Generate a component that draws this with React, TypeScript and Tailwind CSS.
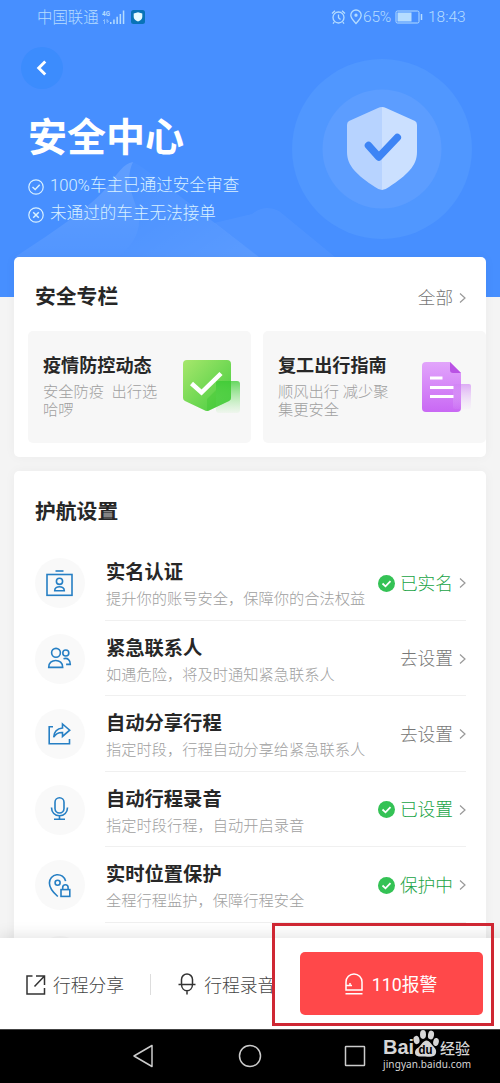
import type { ReactNode } from 'react';
import { ChevronLeft } from 'lucide-react';

type SettingItem = {
  title: string;
  description: string;
  status: string;
  done: boolean;
  icon: ReactNode;
};

const settings: SettingItem[] = [
  {
    title: '实名认证',
    description: '提升你的账号安全，保障你的合法权益',
    status: '已实名',
    done: true,
    icon: (
      <>
        <path d="M9.5 1h8" />
        <rect x="1" y="4.5" width="25" height="20.8" />
        <circle cx="13.5" cy="11.3" r="3.1" />
        <path d="M8.7 20.8c0-5.5 9.6-5.5 9.6 0z" />
      </>
    ),
  },
  {
    title: '紧急联系人',
    description: '如遇危险，将及时通知紧急联系人',
    status: '去设置',
    done: false,
    icon: (
      <>
        <circle cx="10" cy="7.8" r="4.4" />
        <path d="M2.7 22.4c-.4-9.2 14.4-9.2 14 0z" />
        <circle cx="19.8" cy="8" r="3" />
        <path d="M17.5 13.7c4.3-1.2 7 1.6 6.8 5.7h-4.2" />
      </>
    ),
  },
  {
    title: '自动分享行程',
    description: '指定时段，行程自动分享给紧急联系人',
    status: '去设置',
    done: false,
    icon: (
      <>
        <path d="M7 5.7H3.200v17h20.300v-4.800" />
        <path d="M16.500 3l7.200 6.200-7.200 6.200v-3.900c-4-.2-6.700 1.200-8.800 4.700.3-5.200 3.400-8.700 8.800-9.200z" />
      </>
    ),
  },
  {
    title: '自动行程录音',
    description: '指定时段行程，自动开启录音',
    status: '已设置',
    done: true,
    icon: (
      <>
        <rect x="9" y="1.7" width="9" height="15.300" rx="4.500" />
        <path d="M5.500 11.500c0 5 3.400 8.300 8 8.300s8-3.300 8-8.300M13.500 19.800v3.400M8 23.300h11" />
      </>
    ),
  },
  {
    title: '实时位置保护',
    description: '全程行程监护，保障行程安全',
    status: '保护中',
    done: true,
    icon: (
      <>
        <path d="M11.800 24.500C7.600 20.900 3.400 16.200 3.400 11a8.200 8.200 0 0 1 16.200-1.900" />
        <circle cx="11.600" cy="10.800" r="2.500" />
        <rect x="15" y="17.600" width="8.800" height="6.800" />
        <path d="M16.700 17.600v-2.200c0-3.600 5.400-3.600 5.400 0v2.200" />
      </>
    ),
  },
];

function Chevron() {
  return (
    <svg className="ml-[6px] h-[12px] w-[7px]" viewBox="0 0 7 12" fill="none" stroke="#999" strokeWidth="1.2">
      <path d="M1 1.5l5 4.5-5 4.5" />
    </svg>
  );
}

function StatusBar() {
  return (
    <div className="flex h-[34px] items-center pr-[33px] pl-[37px] text-[#b5dcff]">
      <span className="pt-[3px] text-[15.4px] leading-none font-light">中国联通</span>
      <svg className="ml-[3px] h-[16px] w-[25px]" viewBox="0 0 25 16" fill="currentColor">
        <text x="0" y="7" fontSize="8" fontWeight="700" textLength="8" lengthAdjust="spacingAndGlyphs">4G</text>
        <path d="M1 12l1.5-1.5V15M5 10.500v3l1.500-1z" stroke="currentColor" strokeWidth=".6" fill="none" />
        <path d="M8 13h1.500v2H8zM11.200 10.500h1.500V15h-1.500zM14.400 7.800h1.500V15h-1.500zM17.600 5h1.500v10h-1.500zM20.800 1.500h1.500V15h-1.500z" />
      </svg>
      <svg className="ml-[4px] h-[14px] w-[14px]" viewBox="0 0 14 14">
        <rect width="14" height="14" rx="2.5" fill="#0873b7" />
        <path d="M7 2.300l4.300 1.200V7c0 2.200-2 3.800-4.300 4.500C4.700 10.800 2.700 9.200 2.700 7V3.500z" fill="#e5faff" />
      </svg>
      <div className="ml-auto flex items-center">
        <svg className="h-[16px] w-[15px]" viewBox="0 0 15 16" fill="none" stroke="currentColor" strokeWidth="1.3">
          <circle cx="7.5" cy="8.5" r="5.5" />
          <path d="M7.500 5.500v3.300l2 1.700M1 4.500L4 1.700M14 4.500l-3-2.800M3.200 13.200l-1.200 1.500M11.800 13.200l1.200 1.500" />
        </svg>
        <svg className="ml-[4px] h-[16px] w-[12px]" viewBox="0 0 12 16" fill="none" stroke="currentColor" strokeWidth="1.3">
          <path d="M6 14.500C3.300 11.500.8 9 .8 6.200a5.200 5.200 0 0 1 10.400 0C11.200 9 8.700 11.500 6 14.500z" />
          <circle cx="6" cy="6.2" r="1" fill="currentColor" />
        </svg>
        <span className="ml-px w-[31px] pt-[2px] text-[15.5px] leading-none font-light tracking-[-0.2px] whitespace-nowrap">65%</span>
        <svg className="ml-px h-[14px] w-[28px]" viewBox="0 0 28 14" fill="none" stroke="currentColor">
          <rect x="1" y="1" width="23" height="12" rx="1.5" />
          <path d="M2.500 2.500h14v9h-14z" fill="currentColor" stroke="none" />
          <path d="M26.500 4v6" strokeWidth="1.5" />
        </svg>
        <span className="ml-[5px] w-[39px] pt-[2px] text-[15.5px] leading-none font-light whitespace-nowrap">18:43</span>
      </div>
    </div>
  );
}

function Hero() {
  return (
    <header className="relative h-[297px] shrink-0 bg-[#478fff] text-white">
      {/* 背景山形与盾牌 */}
      <svg className="absolute inset-0 h-[297px] w-[500px]" viewBox="0 0 500 297" fill="none">
        <defs>
          <linearGradient id="peak" x1="0" y1="0" x2="0" y2="1">
            <stop offset="0" stopColor="#fff" stopOpacity=".14" />
            <stop offset="1" stopColor="#fff" stopOpacity=".06" />
          </linearGradient>
          <linearGradient id="slope" x1="0" y1="0" x2="1" y2="1">
            <stop offset="0" stopColor="#fff" stopOpacity=".01" />
            <stop offset="1" stopColor="#fff" stopOpacity=".11" />
          </linearGradient>
        </defs>
        <path d="M15 257C55 231 91 207 108 186C118 173 123 164 133 162C126 177 130 190 137 209C143 227 136 242 119 257z" fill="url(#peak)" />
        <path d="M133 162C145 168 160 181 181 197L259 257H119C136 242 143 227 137 209C130 190 126 177 133 162z" fill="url(#slope)" />
        <path d="M214 223L252 214Q265 204 279 211L335 257H259z" fill="#fff" fillOpacity=".045" />
        <circle cx="382" cy="149" r="90" fill="#5097ff" />
        <circle cx="382" cy="149" r="59.5" fill="#5c9dff" />
        <path d="M382 107q-2 0-4 1l-29 13q-2 1-2 4v27c0 14 10 23 28 35q4 3 7 3z" fill="#b7d3ff" />
        <path d="M382 107q2 0 4 1l29 13q2 1 2 4v27c0 14-10 23-28 35q-4 3-7 3z" fill="#cbe0ff" />
        <path d="M368.500 145.500l10.300 11.500 18.500-19.500" stroke="#3d84f5" strokeWidth="7.5" strokeLinecap="round" strokeLinejoin="round" />
      </svg>
      <div className="relative">
        <StatusBar />
        <button className="mt-[13px] ml-[21px] flex h-[42px] w-[42px] items-center justify-center rounded-full bg-[#3c8cfd] pr-px">
          <ChevronLeft size={26} strokeWidth={2.7} strokeLinecap="butt" strokeLinejoin="miter" />
        </button>
        <h1 className="mt-[26px] ml-[28px] text-[39px] leading-[46px] font-bold">安全中心</h1>
        <div className="mt-[13px] ml-[28px] space-y-[4px] text-[16.6px] leading-[24px] font-light text-[#d8f0ff]">
          <div className="flex items-center">
            <svg className="mt-[2px] mr-[6px] h-[16px] w-[16px]" viewBox="0 0 16 16" fill="none" stroke="currentColor" strokeWidth="1.2">
              <circle cx="8" cy="8" r="7.2" />
              <path d="M4.500 8l2.700 2.500 4.500-4.700" strokeWidth="1.5" />
            </svg>
            <span>100%车主已通过安全审查</span>
          </div>
          <div className="flex items-center">
            <svg className="mt-[2px] mr-[6px] h-[16px] w-[16px]" viewBox="0 0 16 16" fill="none" stroke="currentColor" strokeWidth="1.2">
              <circle cx="8" cy="8" r="7.2" />
              <path d="M5.200 5.200l5.600 5.600M10.800 5.200l-5.600 5.600" strokeWidth="1.5" />
            </svg>
            <span>未通过的车主无法接单</span>
          </div>
        </div>
      </div>
    </header>
  );
}

function GreenShield() {
  return (
    <svg className="h-[54px] w-[58px]" viewBox="0 0 58 54" fill="none">
      <defs>
        <linearGradient id="green" x1="0" y1="0" x2="1" y2="1">
          <stop stopColor="#a7e76c" />
          <stop offset="1" stopColor="#42cb3e" />
        </linearGradient>
        <linearGradient id="greenTag" x1="0" y1="0" x2="0" y2="1">
          <stop stopColor="#42cf3b" stopOpacity=".8" />
          <stop offset="1" stopColor="#8de681" stopOpacity=".08" />
        </linearGradient>
      </defs>
      <path d="M4 1h40q4 0 4 4v34q0 2-2 3L27 51q-3 2-6 0L2 42q-2-1-2-3V5q0-4 4-4z" fill="url(#green)" />
      <rect x="33" y="22" width="24" height="32" rx="3" fill="url(#greenTag)" />
      <path d="M24 40L33 31V22h15v17q0 2-2 3L27 51q-1 1-3 1z" fill="#38c52e" fillOpacity=".35" />
      <path d="M8.500 24.500L18.500 33.500 38 14.500" stroke="#fff" strokeWidth="4.5" />
    </svg>
  );
}

function PurpleDocument() {
  return (
    <svg className="h-[52px] w-[49px]" viewBox="0 0 49 52" fill="none">
      <defs>
        <linearGradient id="purple" x1="0" y1="0" x2="0" y2="1">
          <stop stopColor="#e2a5fb" />
          <stop offset="1" stopColor="#c968f4" />
        </linearGradient>
        <linearGradient id="purpleTag" x1="0" y1="0" x2="0" y2="1">
          <stop stopColor="#cf83f4" stopOpacity=".65" />
          <stop offset="1" stopColor="#e8c5fa" stopOpacity=".08" />
        </linearGradient>
      </defs>
      <path d="M4 1h24l11 11v35q0 4-4 4H4q-4 0-4-4V5q0-4 4-4z" fill="url(#purple)" />
      <path d="M28 1l11 11h-8q-3 0-3-3z" fill="#b952e4" />
      <rect x="31" y="23" width="18" height="25" rx="2" fill="url(#purpleTag)" />
      <path d="M8 17h12.500M8 26.500h23.500M8 35.500h23.500" stroke="#fff" strokeWidth="3" />
    </svg>
  );
}

function SafetyColumn() {
  return (
    <section className="relative mx-[14px] mt-[-40px] h-[200px] shrink-0 overflow-hidden rounded-[5px] bg-white shadow-[0_0_12px_rgba(0,0,0,0.04)]">
      <div className="flex h-[74px] items-center justify-between pt-[8px] pr-[20px] pl-[21px]">
        <h2 className="text-[20.8px] font-bold text-[#272727]">安全专栏</h2>
        <div className="flex items-center text-[17.6px] font-light text-[#777]">全部<Chevron /></div>
      </div>
      <div className="flex gap-[12px] pl-[14px]">
        <div className="flex h-[112px] w-[223px] shrink-0 justify-between rounded-[5px] bg-[#f7f7f7] pr-[10px] pl-[15px]">
          <div className="pt-[23px] whitespace-pre">
            <h3 className="text-[18.1px] leading-[24px] font-bold text-[#272727]">疫情防控动态</h3>
            <p className="mt-[5px] text-[15.25px] leading-[18px] font-light text-[#a0a0a0]">{'安全防疫  出行选\n哈啰'}</p>
          </div>
          <div className="pt-[28px]"><GreenShield /></div>
        </div>
        <div className="flex h-[112px] w-[223px] shrink-0 justify-between rounded-[5px] bg-[#f7f7f7] pr-[15px] pl-[15px]">
          <div className="pt-[23px] whitespace-pre">
            <h3 className="text-[18.1px] leading-[24px] font-bold text-[#272727]">复工出行指南</h3>
            <p className="mt-[5px] text-[15.25px] leading-[18px] font-light text-[#a0a0a0]">{'顺风出行 减少聚\n集更安全'}</p>
          </div>
          <div className="pt-[30px]"><PurpleDocument /></div>
        </div>
      </div>
    </section>
  );
}

function SettingRow({ item }: { item: SettingItem }) {
  return (
    <div className="flex h-[75.5px] pl-[21px]">
      <div className="mt-[13px] flex h-[50px] w-[50px] shrink-0 items-center justify-center rounded-full bg-[#f9f9f9]">
        <svg className="mr-px h-[27px] w-[27px]" viewBox="0 0 27 27" fill="none" stroke="#267fc4" strokeWidth="1.6">
          {item.icon}
        </svg>
      </div>
      <div className="mr-[20px] ml-[20px] flex flex-1 border-b border-[#f0f0f0] pl-px">
        <div className="pt-[14px] whitespace-nowrap">
          <h3 className="text-[19.3px] leading-[28px] font-bold text-[#272727]">{item.title}</h3>
          <p className="mt-px text-[15.25px] leading-[22px] font-light text-[#a0a0a0]">{item.description}</p>
        </div>
        <div className={`ml-auto flex h-[76px] shrink-0 items-center text-[17.7px] font-light whitespace-nowrap ${item.done ? 'text-[#20a344]' : 'text-[#777]'}`}>
          {item.done && (
            <svg className="mr-[5px] h-[17px] w-[17px]" viewBox="0 0 17 17" fill="none">
              <circle cx="8.5" cy="8.5" r="8.5" fill="#34c255" />
              <path d="M4.500 8.500l3 2.800 5-5.200" stroke="#fff" strokeWidth="1.8" />
            </svg>
          )}
          <span className="pt-[2px]">{item.status}</span>
          <Chevron />
        </div>
      </div>
    </div>
  );
}

function BottomBar() {
  return (
    <footer className="relative flex h-[91px] shrink-0 items-center bg-white text-[17.8px] font-light whitespace-nowrap text-[#444] shadow-[0_-3px_14px_rgba(0,0,0,0.10)]">
      <div className="ml-[26px] flex items-center pt-[3px]">
        <svg className="mr-[7px] h-[20px] w-[20px]" viewBox="0 0 20 20" fill="none" stroke="#333" strokeWidth="1.5">
          <path d="M6.500 1H1v18h17.500v-6M10 1h8.500v9M18.500 1L8.500 11.500" />
        </svg>
        <span className="pt-[2px]">行程分享</span>
      </div>
      <div className="mt-px ml-[26px] h-[21px] w-px bg-[#ddd]" />
      <div className="ml-[27px] flex items-center pt-[3px]">
        <svg className="mr-[8px] -mt-[2px] h-[22px] w-[18px]" viewBox="0 0 18 22" fill="none" stroke="#333" strokeWidth="1.5">
          <path d="M3.500 11V6.500a5.500 5.500 0 0 1 11 0V11c0 9-11 9-11 0zM.500 11.500h17M9 18v3.500" />
        </svg>
        <span className="pt-[2px]">行程录音</span>
      </div>
      <button className="absolute top-[14px] left-[300px] flex h-[63px] w-[183px] items-center justify-center rounded-[5px] bg-[#ff484a] pr-px text-white">
        <svg className="mr-[9px] h-[22px] w-[18px]" viewBox="0 0 18 22" fill="none" stroke="currentColor" strokeWidth="1.5">
          <path d="M1 17V9a8 8 0 0 1 16 0v8zM1 12.500h6M5 10v2.500M.500 20.700h17" />
        </svg>
        <span className="pt-[4px] font-normal">110报警</span>
      </button>
      {/* 标注红框 */}
      <div className="absolute top-[-15px] left-[272px] h-[103px] w-[222px] border-[3px] border-[#cf2733]" />
    </footer>
  );
}

function BaiduMark() {
  return (
    <div className="absolute top-[-2px] left-[383px] h-[54px] w-[92px] text-[#d6d6d6]">
      <div className="flex h-[29px] items-end font-['Liberation_Sans'] leading-none font-bold">
        <span className="w-[30px] text-[20px]">Bai</span>
        <svg className="h-[28px] w-[26px]" viewBox="0 0 26 28" fill="currentColor">
          <ellipse cx="3.5" cy="11" rx="3" ry="4.2" transform="rotate(-12 3.5 11)" />
          <ellipse cx="10" cy="5.5" rx="3" ry="4.4" />
          <ellipse cx="18" cy="6" rx="3" ry="4.4" transform="rotate(10 18 6)" />
          <ellipse cx="23" cy="13" rx="2.8" ry="4" transform="rotate(12 23 13)" />
          <path d="M8.500 15C12 10 15 10.500 18 14.500c3 4 6 5.500 5 9.500-1 4-5 4-11 3.500C5 28 2 27 2 23.500c0-4 4-4.500 6.500-8.500z" />
          <text x="5.500" y="25" fill="#000" fontSize="13" fontWeight="700" textLength="14" lengthAdjust="spacingAndGlyphs">du</text>
        </svg>
        <span className="ml-px pb-[2px] font-['Noto_Sans_CJK_SC'] text-[15px] font-medium">经验</span>
      </div>
      <div className="mt-px font-['Noto_Sans'] text-[10px] leading-[12px] tracking-[0.1px]">jingyan.baidu.com</div>
    </div>
  );
}

function NavigationBar() {
  return (
    <nav className="relative h-[54px] shrink-0 border-t border-[#444] bg-black">
      <div className="flex h-[52px] items-center pl-[132px]">
        <svg className="h-[24px] w-[22px]" viewBox="0 0 22 24" fill="none" stroke="#ccc" strokeWidth="1.5" strokeLinejoin="round">
          <path d="M20 1.500v21L2 12z" />
        </svg>
        <svg className="ml-[84px] h-[24px] w-[24px]" viewBox="0 0 24 24" fill="none" stroke="#ccc" strokeWidth="1.5">
          <circle cx="12" cy="12" r="10.5" />
        </svg>
        <svg className="ml-[82px] h-[22px] w-[22px]" viewBox="0 0 22 22" fill="none" stroke="#ccc" strokeWidth="1.5">
          <rect x="1.5" y="1.5" width="19" height="19" rx=".5" />
        </svg>
      </div>
      <BaiduMark />
    </nav>
  );
}

export default function App() {
  return (
    <div className="flex h-[1083px] w-[500px] flex-col overflow-hidden bg-[#f4f4f4] font-[Roboto,'Noto_Sans_CJK_SC',sans-serif]" lang="zh-CN">
      <main className="flex h-[938px] shrink-0 flex-col overflow-hidden">
        <Hero />
        <SafetyColumn />
        <section className="mx-[14px] mt-[14px] h-[560px] shrink-0 rounded-[5px] bg-white shadow-[0_0_12px_rgba(0,0,0,0.04)]">
          <h2 className="h-[74px] pt-[26px] pl-[21px] text-[20.8px] leading-[30px] font-bold text-[#272727]">护航设置</h2>
          {settings.map((item) => (
            <SettingRow key={item.title} item={item} />
          ))}
          <div className="mt-[13px] ml-[21px] h-[50px] w-[50px] rounded-full bg-[#f9f9f9]" />
        </section>
      </main>
      <BottomBar />
      <NavigationBar />
    </div>
  );
}
